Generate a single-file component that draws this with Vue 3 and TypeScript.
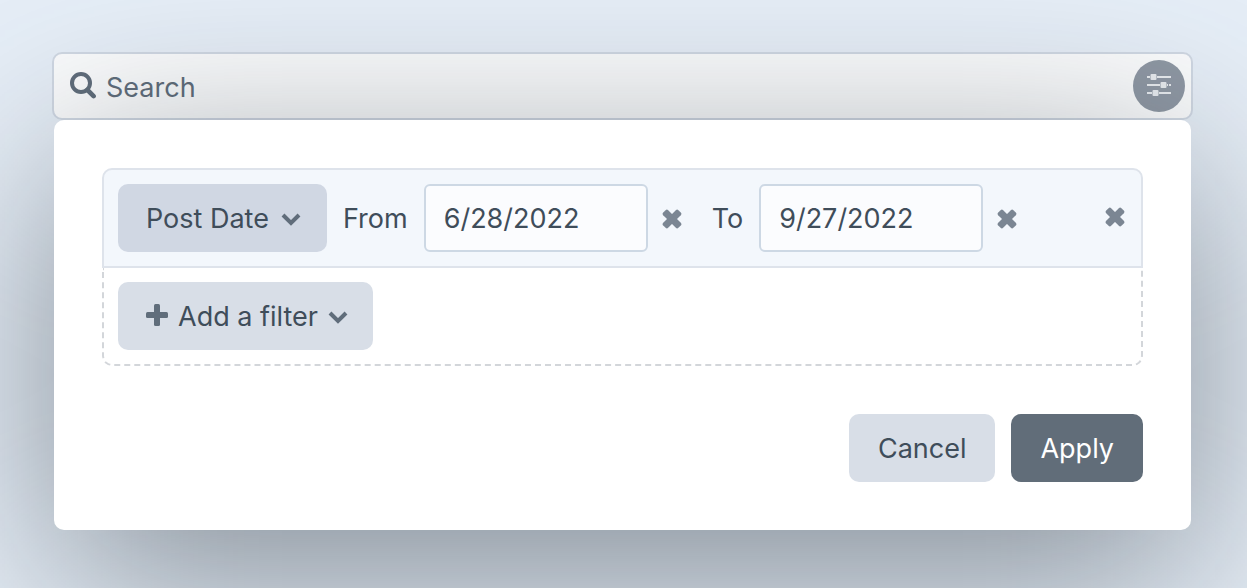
<script setup lang="ts">
import { ref } from 'vue'

const query = ref('')
const fromDate = ref('6/28/2022')
const toDate = ref('9/27/2022')
</script>

<template>
  <main class="page">
    <div class="search" role="search">
      <svg class="search-icon" width="26" height="27" viewBox="0 0 26 27" aria-hidden="true">
        <circle cx="11" cy="11" r="9" fill="none" stroke="currentColor" stroke-width="4" />
        <path d="M17.5 18 23.6 24.1" fill="none" stroke="currentColor" stroke-width="4.6" stroke-linecap="round" />
      </svg>
      <input v-model="query" class="search-input" type="text" placeholder="Search" aria-label="Search" />
      <button class="filter-toggle" type="button" aria-label="Filter options">
        <svg width="24" height="24" viewBox="0 0 24 24" aria-hidden="true">
          <path d="M0 4h3M10 4h14M0 12h13M20 12h1M22 12h2M0 20h5M12 20h12" fill="none" stroke="currentColor" stroke-width="2" />
          <rect x="3.5" y="1" width="6" height="6" rx="1" fill="currentColor" />
          <rect x="13.5" y="9" width="6" height="6" rx="1" fill="currentColor" />
          <rect x="5.5" y="17" width="6" height="6" rx="1" fill="currentColor" />
        </svg>
      </button>
    </div>

    <div class="popover">
      <form class="panel" @submit.prevent>
        <div class="rule">
          <button class="btn btn-rule" type="button">
            <span>Post Date</span>
            <svg class="chevron" width="20" height="14" viewBox="0 0 20 14" aria-hidden="true">
              <path d="m2 3 8 8 8-8" fill="none" stroke="currentColor" stroke-width="4" />
            </svg>
          </button>
          <label for="from-date">From</label>
          <div class="date">
            <input id="from-date" v-model="fromDate" class="date-input" type="text" />
            <button class="clear" type="button" aria-label="Clear start date" @click="fromDate = ''">
              <svg width="20" height="20" viewBox="0 0 20 20" aria-hidden="true">
                <g fill="currentColor">
                  <rect x="-0.75" y="6.5" width="21.5" height="7" rx="1.8" transform="rotate(45 10 10)" />
                  <rect x="-0.75" y="6.5" width="21.5" height="7" rx="1.8" transform="rotate(-45 10 10)" />
                </g>
              </svg>
            </button>
          </div>
          <label for="to-date">To</label>
          <div class="date">
            <input id="to-date" v-model="toDate" class="date-input" type="text" />
            <button class="clear" type="button" aria-label="Clear end date" @click="toDate = ''">
              <svg width="20" height="20" viewBox="0 0 20 20" aria-hidden="true">
                <g fill="currentColor">
                  <rect x="-0.75" y="6.5" width="21.5" height="7" rx="1.8" transform="rotate(45 10 10)" />
                  <rect x="-0.75" y="6.5" width="21.5" height="7" rx="1.8" transform="rotate(-45 10 10)" />
                </g>
              </svg>
            </button>
          </div>
          <button class="clear remove" type="button" aria-label="Remove filter">
            <svg width="20" height="20" viewBox="0 0 20 20" aria-hidden="true">
              <g fill="currentColor">
                <rect x="-0.75" y="6.5" width="21.5" height="7" rx="1.8" transform="rotate(45 10 10)" />
                <rect x="-0.75" y="6.5" width="21.5" height="7" rx="1.8" transform="rotate(-45 10 10)" />
              </g>
            </svg>
          </button>
        </div>

        <div class="add-row">
          <button class="btn btn-add" type="button">
            <svg class="plus" width="22" height="22" viewBox="0 0 22 22" aria-hidden="true">
              <rect x="8" width="6" height="22" rx="1.5" fill="currentColor" />
              <rect y="8" width="22" height="6" rx="1.5" fill="currentColor" />
            </svg>
            <span>Add a filter</span>
            <svg class="chevron" width="20" height="14" viewBox="0 0 20 14" aria-hidden="true">
              <path d="m2 3 8 8 8-8" fill="none" stroke="currentColor" stroke-width="4" />
            </svg>
          </button>
        </div>

        <div class="actions">
          <button class="btn" type="button">Cancel</button>
          <button class="btn btn-primary" type="submit">Apply</button>
        </div>
      </form>
    </div>
  </main>
</template>

<style>
body {
  margin: 0;
  background: #e6eef7;
}
</style>

<style scoped>
.page,
.page * {
  box-sizing: border-box;
}

.page {
  position: relative;
  min-height: 100vh;
  padding: 52px 54px 58px 52px;
  overflow: hidden;
  color: #3f4d5a;
  font-family: Inter, Roboto, sans-serif;
  font-size: 27px;
  line-height: 36px;
}

button,
input {
  margin: 0;
  font: inherit;
  color: inherit;
}

button {
  cursor: pointer;
}

.search {
  display: flex;
  align-items: center;
  gap: 10px;
  height: 68px;
  padding: 0 6px 0 16px;
  border: 2px solid #d0d8e3;
  border-radius: 10px;
  background: #fbfcfd;
}

.search-icon {
  flex: none;
  margin-bottom: 2px;
  color: #606d7b;
}

.search-input {
  flex: 1;
  min-width: 0;
  height: 60px;
  padding: 2px 0 0;
  border: 0;
  outline: 0;
  background: none;
}

.search-input::placeholder {
  color: #606d7b;
  opacity: 1;
}

.filter-toggle {
  display: flex;
  flex: none;
  align-items: center;
  justify-content: center;
  width: 52px;
  height: 52px;
  padding: 0 0 2px;
  border: 0;
  border-radius: 50%;
  background: #8f98a4;
  color: #e9ecf0;
}

.popover {
  position: relative;
  margin: 0 2px;
}

/* Wide soft shadow that falls over the search bar and the page */
.popover::before {
  content: '';
  position: absolute;
  inset: 50px 0 -50px;
  border-radius: 10px;
  background: rgba(31, 41, 51, 0.5);
  filter: blur(100px);
  pointer-events: none;
}

.panel {
  position: relative;
  padding: 48px;
  border-radius: 10px;
  background: #fff;
}

.rule {
  display: flex;
  align-items: center;
  gap: 16px;
  padding: 14px;
  border: 2px solid #dee3eb;
  border-radius: 10px 10px 0 0;
  background: #f3f7fc;
}

.rule label {
  padding-top: 2px;
}

.date {
  display: flex;
  align-items: center;
}

.date-input {
  width: 224px;
  height: 68px;
  padding: 0 18px;
  border: 2px solid #cdd8e4;
  border-radius: 6px;
  outline: 0;
  background: #fbfcfe;
}

.clear {
  display: flex;
  align-items: center;
  justify-content: center;
  width: 48px;
  height: 48px;
  padding: 2px 0 0;
  border: 0;
  background: none;
  color: #7b8693;
}

.remove {
  width: 24px;
  margin-left: auto;
  padding: 0 0 2px;
}

.add-row {
  padding: 14px;
  border: 2px dashed #d3d6da;
  border-top: 0;
  border-radius: 0 0 10px 10px;
}

.btn {
  display: inline-flex;
  align-items: center;
  justify-content: center;
  gap: 10px;
  height: 68px;
  padding: 2px 28px 0;
  border: 0;
  border-radius: 10px;
  background: #d8dee7;
  white-space: nowrap;
}

.btn-rule {
  gap: 12px;
  padding-right: 26px;
  background: #d0d7e3;
}

.btn-add {
  padding-right: 25px;
}

.chevron,
.plus {
  flex: none;
  color: #606d7b;
}

.plus {
  margin-bottom: 4px;
}

.actions {
  display: flex;
  justify-content: flex-end;
  gap: 16px;
  margin-top: 48px;
}

.actions .btn {
  padding: 2px 29px 0;
}

.actions .btn-primary {
  background: #616d79;
  color: #fff;
}
</style>
